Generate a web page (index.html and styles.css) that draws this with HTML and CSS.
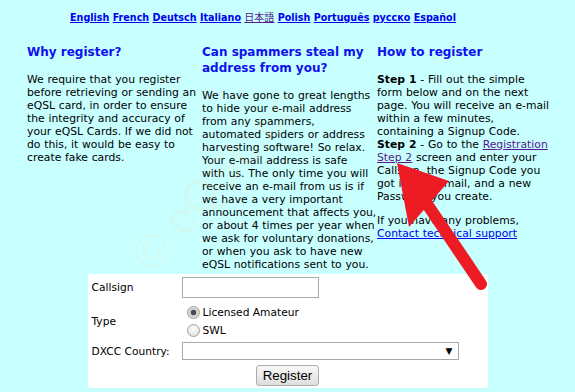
FILE: index.html
```html
<!DOCTYPE html>
<html lang="en">
<head>
    <meta charset="UTF-8">
    <title>eQSL Register</title>
    <link rel="stylesheet" href="styles.css">
</head>
<body>
    <div class="langs">
        <a href="#">English</a> <a href="#">French</a> <a href="#">Deutsch</a> <a href="#">Italiano</a> <a href="#" class="visited jp">日本語</a> <a href="#">Polish</a> <a href="#">Português</a> <a href="#">русско</a> <a href="#">Español</a>
    </div>

    <div class="columns">
        <div class="col">
            <h3>Why register?</h3>
            <p>We require that you register<br>
            before retrieving or sending an<br>
            eQSL card, in order to ensure<br>
            the integrity and accuracy of<br>
            your eQSL Cards. If we did not<br>
            do this, it would be easy to<br>
            create fake cards.</p>
        </div>
        <div class="col">
            <h3>Can spammers steal my<br>address from you?</h3>
            <p>We have gone to great lengths<br>
            to hide your e-mail address<br>
            from any spammers,<br>
            automated spiders or address<br>
            harvesting software! So relax.<br>
            Your e-mail address is safe<br>
            with us. The only time you will<br>
            receive an e-mail from us is if<br>
            we have a very important<br>
            announcement that affects you,<br>
            or about 4 times per year when<br>
            we ask for voluntary donations,<br>
            or when you ask to have new<br>
            eQSL notifications sent to you.</p>
        </div>
        <div class="col">
            <h3>How to register</h3>
            <p><b>Step 1</b> - Fill out the simple<br>
            form below and on the next<br>
            page. You will receive an e-mail<br>
            within a few minutes,<br>
            containing a Signup Code.<br>
            <b>Step 2</b> - Go to the <a href="#" class="visited">Registration<br>Step 2</a> screen and enter your<br>
            Callsign, the Signup Code you<br>
            got in the e-mail, and a new<br>
            Password you create.</p>
            <p>If you have any problems,<br>
            <a href="#">Contact technical support</a></p>
        </div>
    </div>

    <form class="signup">
        <div class="row">
            <label class="name" for="call">Callsign</label>
            <input type="text" id="call" class="text">
        </div>
        <div class="row type-row">
            <span class="name">Type</span>
            <div class="radios">
                <label class="opt"><input type="radio" name="type" checked> Licensed Amateur</label>
                <label class="opt"><input type="radio" name="type"> SWL</label>
            </div>
        </div>
        <div class="row dxcc-row">
            <label class="name" for="dxcc">DXCC Country:</label>
            <div class="select-wrap">
                <select id="dxcc"><option></option></select>
                <span class="caret">▼</span>
            </div>
        </div>
        <div class="submit-row">
            <button type="button">Register</button>
        </div>
    </form>

    <div class="watermark">© eQSL.cc</div>

    <!-- red pointer arrow drawn over the page -->
    <svg class="arrow" width="575" height="392" viewBox="0 0 575 392">
        <line x1="425" y1="201" x2="481" y2="284" stroke="#ed1c24" stroke-width="12" stroke-linecap="round"/>
        <polygon points="397,163 409,227 449,181" fill="#ed1c24"/>
    </svg>
</body>
</html>
```

FILE: styles.css
```css
* {
    box-sizing: border-box;
}

body {
    margin: 0;
    background: #c8ffff;
    font-family: "DejaVu Sans", Verdana, sans-serif;
    font-size: 10.8px;
    line-height: 13px;
    word-spacing: 0.3px;
    color: #000;
    position: relative;
    height: 392px;
    overflow: hidden;
}

a {
    color: #0000ee;
}

a.visited {
    color: #551a8b;
}

.langs {
    padding: 10px 49px 0 0;
    text-align: center;
    font-family: "DejaVu Sans Condensed", "Liberation Sans", sans-serif;
    font-weight: bold;
    font-size: 10.67px;
    word-spacing: 0;
}

.langs .jp {
    font-family: "Noto Sans CJK JP", sans-serif;
    font-weight: normal;
    font-size: 10px;
}

.columns {
    display: grid;
    grid-template-columns: 175px 175px 175px;
    margin: 20px 0 0 25px;
}

.col {
    padding-left: 2px;
}

.col h3 {
    margin: 0 0 13px;
    font-size: 12px;
    line-height: 16px;
    word-spacing: 0;
    color: #1010ee;
}

.col p {
    margin: 0 0 11px;
    white-space: nowrap;
}

.col p:last-child {
    margin-bottom: 0;
}

.signup {
    width: 400px;
    margin: 3px auto 0;
    background: #fff;
    padding: 3px 4px 2px;
    font-size: 10.67px;
    word-spacing: 0;
}

.row {
    display: flex;
    align-items: center;
}

.row .name {
    width: 90px;
}

.text {
    width: 137px;
    height: 21px;
    border: 1px solid #a9a9a9;
    padding: 1px 3px;
    font: inherit;
}

.type-row {
    margin-top: 5px;
}

.radios {
    display: flex;
    flex-direction: column;
}

.opt {
    display: flex;
    align-items: center;
    height: 18px;
}

.opt input {
    appearance: none;
    width: 13px;
    height: 13px;
    margin: 0 3px 0 5px;
    border: 1px solid #a0a0a0;
    border-radius: 50%;
    background: radial-gradient(circle at 50% 35%, #fff 0%, #e4e4e4 70%, #d0d0d0 100%);
}

.opt input:checked {
    background: radial-gradient(circle, #4a4a4a 0, #4a4a4a 2.5px, #c8c8c8 3px, #f0f0f0 100%);
}

.dxcc-row {
    margin-top: 3px;
}

.select-wrap {
    position: relative;
}

.select-wrap select {
    appearance: none;
    width: 277px;
    height: 18px;
    border: 1px solid #a9a9a9;
    border-radius: 0;
    background: #fff;
    font: inherit;
}

.caret {
    position: absolute;
    right: 6px;
    top: 3px;
    font-size: 9px;
    line-height: 12px;
    pointer-events: none;
}

.submit-row {
    display: flex;
    justify-content: center;
    margin-top: 5px;
}

.submit-row button {
    width: 63px;
    height: 21px;
    padding: 0;
    border: 1px solid #adadad;
    border-radius: 3px;
    background: linear-gradient(#f7f7f7, #dedede);
    font-family: "Liberation Sans", Arial, sans-serif;
    font-size: 13.33px;
    color: #000;
}

.watermark {
    position: absolute;
    left: 140px;
    top: 240px;
    transform-origin: 0 50%;
    transform: rotate(-48deg);
    font-family: "Liberation Sans", sans-serif;
    font-size: 46px;
    line-height: 46px;
    white-space: nowrap;
    color: rgba(255, 215, 150, 0.14);
    pointer-events: none;
}

.arrow {
    position: absolute;
    left: 0;
    top: 0;
    pointer-events: none;
}
```
